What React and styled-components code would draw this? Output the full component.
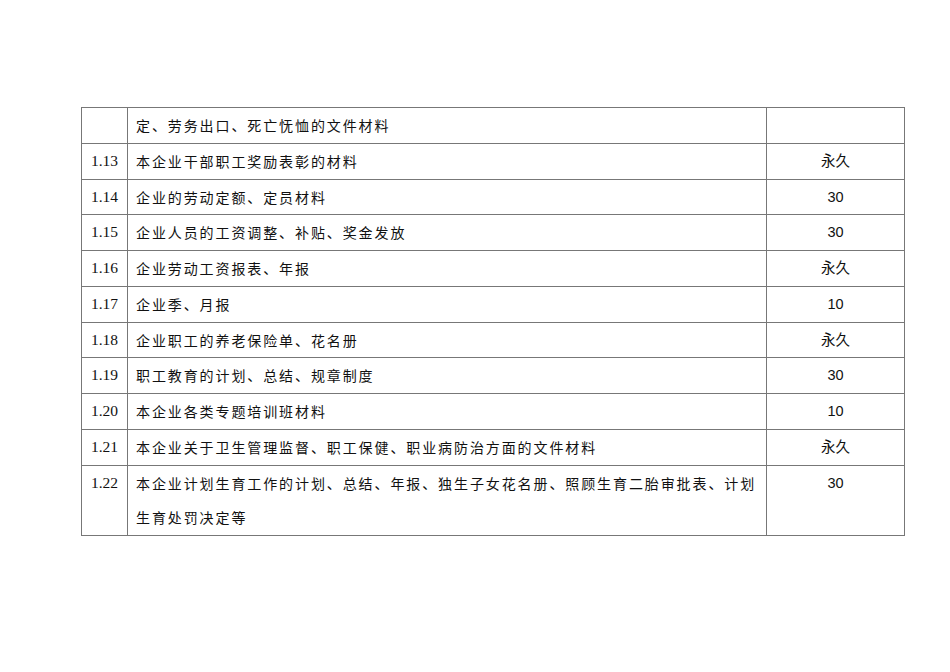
import React from "react";
import styled, { createGlobalStyle } from "styled-components";

const GlobalStyle = createGlobalStyle`
  html, body { margin: 0; padding: 0; background: #fff; }
`;

const Page = styled.div`
  padding: 107px 0 0 81px;
`;

const Table = styled.table`
  border-collapse: collapse;
  table-layout: fixed;
  width: 824px;
  border: 1px solid #777;
`;

const Cell = styled.td`
  box-sizing: border-box;
  border: 1px solid #777;
  padding: 0;
  vertical-align: top;
  line-height: 34.75px;
  color: #111;
`;

const NoCell = styled(Cell)`
  width: 46px;
  text-align: center;
  font-family: "Liberation Serif", "Times New Roman", serif;
  font-size: 15.5px;
`;

const TextCell = styled(Cell)`
  width: 639px;
  padding-left: 8px;
  padding-right: 6px;
  font-family: "Noto Sans CJK SC", "Noto Sans", sans-serif;
  font-size: 14px;
  letter-spacing: 1.9px;
`;

const TermCell = styled(Cell)`
  text-align: center;
  font-family: "Liberation Sans", "Noto Sans CJK SC", sans-serif;
  font-size: 14.5px;
`;

const rows = [
  ["", "定、劳务出口、死亡怃恤的文件材料", ""],
  ["1.13", "本企业干部职工奖励表彰的材料", "永久"],
  ["1.14", "企业的劳动定额、定员材料", "30"],
  ["1.15", "企业人员的工资调整、补贴、奖金发放", "30"],
  ["1.16", "企业劳动工资报表、年报", "永久"],
  ["1.17", "企业季、月报", "10"],
  ["1.18", "企业职工的养老保险单、花名册", "永久"],
  ["1.19", "职工教育的计划、总结、规章制度", "30"],
  ["1.20", "本企业各类专题培训班材料", "10"],
  ["1.21", "本企业关于卫生管理监督、职工保健、职业病防治方面的文件材料", "永久"],
  ["1.22", "本企业计划生育工作的计划、总结、年报、独生子女花名册、照顾生育二胎审批表、计划生育处罚决定等", "30"],
];

export default function App() {
  return (
    <Page>
      <GlobalStyle />
      <Table>
        <tbody>
          {rows.map(([no, text, term], i) => (
            <tr key={i}>
              <NoCell>{no}</NoCell>
              <TextCell>{text}</TextCell>
              <TermCell>{term}</TermCell>
            </tr>
          ))}
        </tbody>
      </Table>
    </Page>
  );
}
